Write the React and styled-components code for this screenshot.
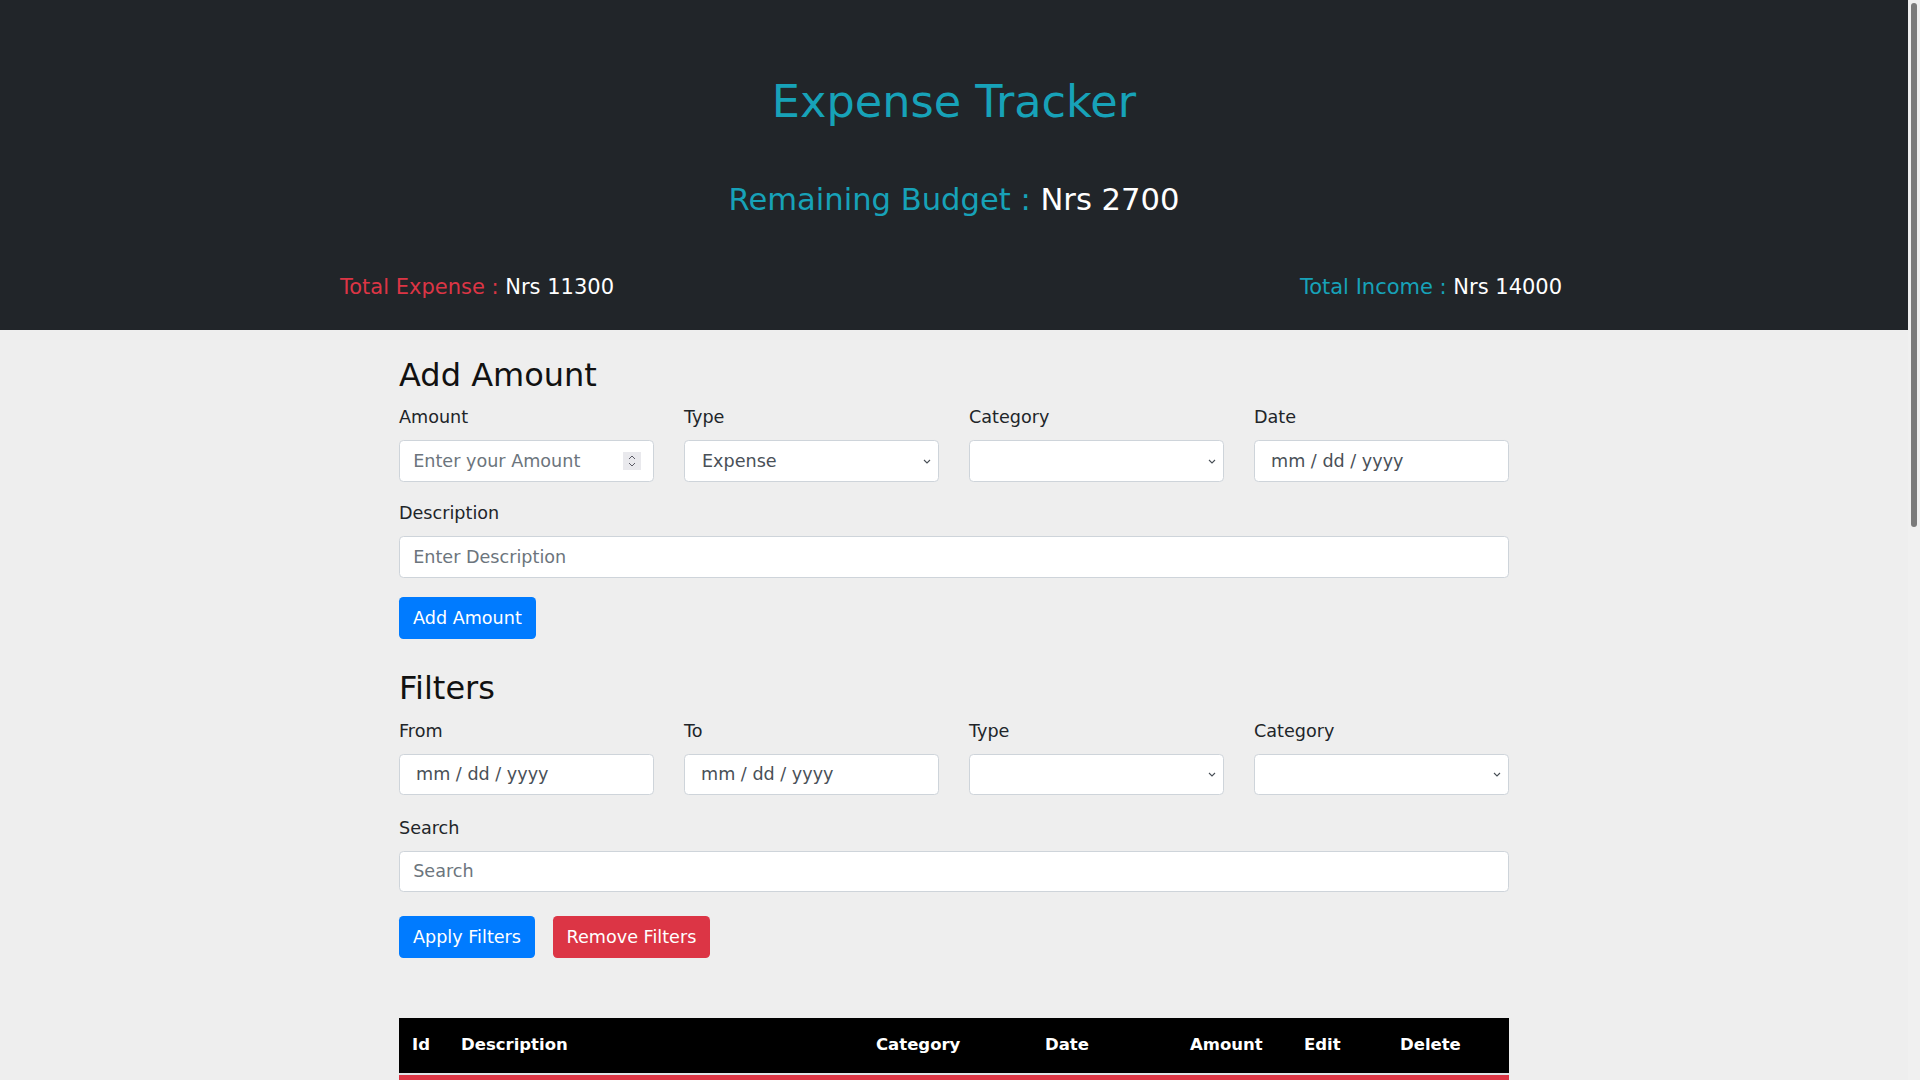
import React from 'react';
import styled, { createGlobalStyle, css } from 'styled-components';

const entries = [
  { id: 1, description: 'Grocery shopping', category: 'Food', date: '2023-01-02', amount: 1500, type: 'expense' },
  { id: 2, description: 'Monthly salary', category: 'Salary', date: '2023-01-03', amount: 10000, type: 'income' },
  { id: 3, description: 'Electricity bill', category: 'Bills', date: '2023-01-04', amount: 800, type: 'expense' },
  { id: 4, description: 'Bus fare', category: 'Travel', date: '2023-01-05', amount: 200, type: 'expense' },
  { id: 5, description: 'Freelance work', category: 'Business', date: '2023-01-06', amount: 4000, type: 'income' },
  { id: 6, description: 'Internet recharge', category: 'Bills', date: '2023-01-07', amount: 1000, type: 'expense' },
  { id: 7, description: 'Movie tickets', category: 'Entertainment', date: '2023-01-08', amount: 600, type: 'expense' },
  { id: 8, description: 'Lunch with friends', category: 'Food', date: '2023-01-09', amount: 900, type: 'expense' },
  { id: 9, description: 'Books', category: 'Education', date: '2023-01-10', amount: 700, type: 'expense' },
  { id: 10, description: 'Taxi', category: 'Travel', date: '2023-01-11', amount: 400, type: 'expense' },
  { id: 11, description: 'Vegetables', category: 'Food', date: '2023-01-12', amount: 300, type: 'expense' },
  { id: 12, description: 'Gym membership', category: 'Health', date: '2023-01-13', amount: 1200, type: 'expense' },
  { id: 13, description: 'Medicine', category: 'Health', date: '2023-01-14', amount: 500, type: 'expense' },
  { id: 14, description: 'Water bill', category: 'Bills', date: '2023-01-15', amount: 250, type: 'expense' },
  { id: 15, description: 'Snacks', category: 'Food', date: '2023-01-16', amount: 150, type: 'expense' },
  { id: 16, description: 'Phone recharge', category: 'Bills', date: '2023-01-17', amount: 500, type: 'expense' },
  { id: 17, description: 'Stationery', category: 'Education', date: '2023-01-18', amount: 350, type: 'expense' },
  { id: 18, description: 'Dinner', category: 'Food', date: '2023-01-19', amount: 850, type: 'expense' },
  { id: 19, description: 'Fuel', category: 'Travel', date: '2023-01-20', amount: 800, type: 'expense' },
  { id: 20, description: 'Gift', category: 'Other', date: '2023-01-21', amount: 500, type: 'expense' },
  { id: 21, description: 'Laundry', category: 'Other', date: '2023-01-22', amount: 400, type: 'expense' },
];

const columns = [
  { label: 'Id', width: 49 },
  { label: 'Description', width: 415 },
  { label: 'Category', width: 169 },
  { label: 'Date', width: 145 },
  { label: 'Amount', width: 114 },
  { label: 'Edit', width: 96 },
  { label: 'Delete', width: 122 },
];

const chevron =
  "url(\"data:image/svg+xml,%3Csvg xmlns='http://www.w3.org/2000/svg' width='8' height='5' viewBox='0 0 8 5'%3E%3Cpath d='M1 1l3 3 3-3' fill='none' stroke='%23495057' stroke-width='1.1'/%3E%3C/svg%3E\")";

function App() {
  return (
    <Page>
      <GlobalStyle />
      <Content>
        <Header>
          <Title>Expense Tracker</Title>
          <Budget>Remaining Budget : <Value>Nrs 2700</Value></Budget>
          <Totals>
            <Total $tone="expense">Total Expense : <Value>Nrs 11300</Value></Total>
            <Total $tone="income">Total Income : <Value>Nrs 14000</Value></Total>
          </Totals>
        </Header>

        <Main>
          <SectionTitle>Add Amount</SectionTitle>
          <FieldGrid>
            <Field>
              <Label>Amount</Label>
              <NumberWrap>
                <Input type="text" placeholder="Enter your Amount" />
                <Spinner>
                  <svg width="8" height="5" viewBox="0 0 8 5"><path d="M1 4l3-3 3 3" fill="none" stroke="#5b5b66" strokeWidth="1" /></svg>
                  <svg width="8" height="5" viewBox="0 0 8 5"><path d="M1 1l3 3 3-3" fill="none" stroke="#5b5b66" strokeWidth="1" /></svg>
                </Spinner>
              </NumberWrap>
            </Field>
            <Field>
              <Label>Type</Label>
              <Select defaultValue="expense">
                <option value="expense">Expense</option>
                <option value="income">Income</option>
              </Select>
            </Field>
            <Field>
              <Label>Category</Label>
              <Select defaultValue="">
                <option value=""></option>
              </Select>
            </Field>
            <Field>
              <Label>Date</Label>
              <DateInput type="text" placeholder="mm / dd / yyyy" />
            </Field>
          </FieldGrid>
          <Field $spaced>
            <Label>Description</Label>
            <Input type="text" placeholder="Enter Description" />
          </Field>
          <Button $color="#007bff">Add Amount</Button>

          <SectionTitle $top="30.7px">Filters</SectionTitle>
          <FieldGrid $gap="19.5px">
            <Field>
              <Label>From</Label>
              <DateInput type="text" placeholder="mm / dd / yyyy" />
            </Field>
            <Field>
              <Label>To</Label>
              <DateInput type="text" placeholder="mm / dd / yyyy" />
            </Field>
            <Field>
              <Label>Type</Label>
              <Select defaultValue="">
                <option value=""></option>
              </Select>
            </Field>
            <Field>
              <Label>Category</Label>
              <Select defaultValue="">
                <option value=""></option>
              </Select>
            </Field>
          </FieldGrid>
          <Field $spaced>
            <Label>Search</Label>
            <Input type="text" placeholder="Search" />
          </Field>
          <ButtonRow>
            <Button $color="#007bff">Apply Filters</Button>
            <Button $color="#dc3545">Remove Filters</Button>
          </ButtonRow>

          <Table>
            <colgroup>
              {columns.map(c => <col key={c.label} style={{ width: c.width }} />)}
            </colgroup>
            <thead>
              <tr>
                {columns.map(c => <Th key={c.label}>{c.label}</Th>)}
              </tr>
            </thead>
            <tbody>
              {entries.map(e => (
                <Row key={e.id} $kind={e.type}>
                  <Td>{e.id}</Td>
                  <Td>{e.description}</Td>
                  <Td>{e.category}</Td>
                  <Td>{e.date}</Td>
                  <Td>{e.amount}</Td>
                  <Td>Edit</Td>
                  <Td>Delete</Td>
                </Row>
              ))}
            </tbody>
          </Table>
        </Main>
      </Content>
      <ScrollRail>
        <ScrollThumb />
      </ScrollRail>
    </Page>
  );
}

export default App;

const GlobalStyle = createGlobalStyle`
  * { box-sizing: border-box; }
  html, body { margin: 0; padding: 0; }
  body {
    background: #eeeeee;
    font-family: "DejaVu Sans", "Noto Sans", sans-serif;
    font-size: 17.6px;
    color: #212529;
  }
`;

const Page = styled.div`
  display: grid;
  grid-template-columns: 1fr 12px;
  align-items: start;
`;

const Content = styled.div`
  min-width: 0;
`;

const ScrollRail = styled.div`
  position: sticky;
  top: 0;
  height: 100vh;
  background: #f0f0f0;
  padding: 3px 3px;
`;

const ScrollThumb = styled.div`
  width: 6px;
  height: 524px;
  border-radius: 3px;
  background: #7b7b7b;
`;

const Header = styled.header`
  background: #212529;
  padding: 75.5px 0 29.7px;
  text-align: center;
`;

const Title = styled.h1`
  margin: 0;
  font-size: 44.6px;
  line-height: 1.17;
  font-weight: 400;
  color: #17a2b8;
`;

const Budget = styled.h3`
  margin: 54.7px 0 0;
  font-size: 30.6px;
  line-height: 1.2;
  font-weight: 400;
  color: #17a2b8;
`;

const Totals = styled.div`
  display: grid;
  grid-template-columns: 1fr 1fr;
  margin-top: 55.7px;
`;

const Total = styled.h5`
  margin: 0;
  font-size: 21px;
  line-height: 1.2;
  font-weight: 400;
  color: ${p => (p.$tone === 'expense' ? '#dc3545' : '#17a2b8')};
`;

const Value = styled.span`
  color: #ffffff;
`;

const Main = styled.main`
  width: 1110px;
  margin: 0 auto;
  padding: 26.4px 0 54px;
`;

const SectionTitle = styled.h2`
  margin: ${p => p.$top || '0'} 0 10px;
  font-size: 32px;
  line-height: 1.2;
  font-weight: 400;
  color: #111;
`;

const FieldGrid = styled.div`
  display: grid;
  grid-template-columns: repeat(4, 1fr);
  column-gap: 30px;
  margin-bottom: ${p => p.$gap || '18.4px'};
`;

const Field = styled.div`
  display: flex;
  flex-direction: column;
  margin-bottom: ${p => (p.$spaced ? '18.8px' : '0')};
`;

const Label = styled.label`
  display: block;
  font-size: 17.6px;
  line-height: 1.5;
  margin-bottom: 9.6px;
  color: #212529;
`;

const control = css`
  width: 100%;
  height: 41.5px;
  padding: 0 13.2px;
  font-family: inherit;
  font-size: 17.6px;
  color: #495057;
  background-color: #ffffff;
  border: 1px solid #ced4da;
  border-radius: 4.4px;
  outline: none;
  &::placeholder {
    color: #6c757d;
  }
`;

const Input = styled.input`
  ${control}
`;

const DateInput = styled.input`
  ${control}
  padding-left: 16px;
  &::placeholder {
    color: #495057;
  }
`;

const Select = styled.select`
  ${control}
  appearance: none;
  padding-left: 17px;
  background-image: ${chevron};
  background-repeat: no-repeat;
  background-position: right 7px center;
  background-size: 8px 5px;
`;

const NumberWrap = styled.div`
  position: relative;
`;

const Spinner = styled.div`
  position: absolute;
  top: 50%;
  right: 13px;
  transform: translateY(-50%);
  width: 18px;
  height: 18px;
  background: #e9e9ed;
  display: flex;
  flex-direction: column;
  align-items: center;
  justify-content: center;
  gap: 2px;
`;

const Button = styled.button`
  height: 42px;
  padding: 0 14px;
  font-family: inherit;
  font-size: 17.6px;
  color: #ffffff;
  background: ${p => p.$color};
  border: none;
  border-radius: 4.4px;
  cursor: pointer;
  align-self: flex-start;
`;

const ButtonRow = styled.div`
  display: flex;
  gap: 17.6px;
  margin-top: 24px;
`;

const Table = styled.table`
  width: 100%;
  margin-top: 59.4px;
  border-collapse: collapse;
  table-layout: fixed;
`;

const Th = styled.th`
  background: #000000;
  color: #ffffff;
  text-align: left;
  font-size: 16.5px;
  font-weight: 700;
  line-height: 1.5;
  padding: 15.3px 13px;
  border-bottom: 2px solid #dee2e6;
  white-space: nowrap;
`;

const Row = styled.tr`
  background: ${p => (p.$kind === 'expense' ? '#dc3545' : '#17a2b8')};
  color: #ffffff;
`;

const Td = styled.td`
  padding: 12.8px 13px;
  font-size: 17.6px;
  line-height: 1.5;
  white-space: nowrap;
  overflow: hidden;
`;
